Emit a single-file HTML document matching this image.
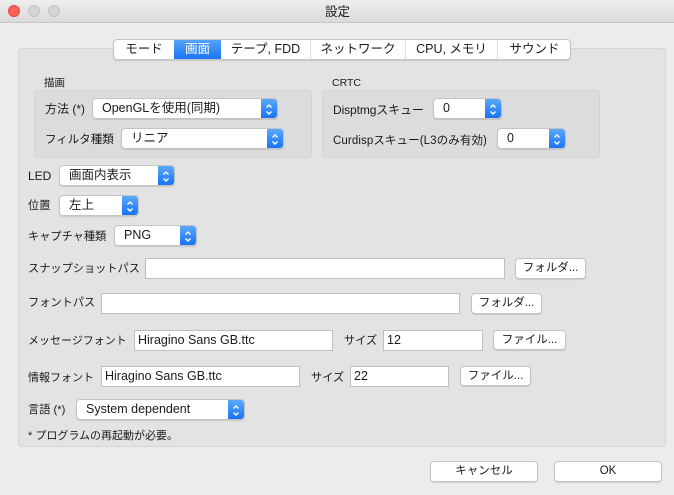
<!DOCTYPE html>
<html><head><meta charset="utf-8"><style>
*{box-sizing:border-box;margin:0;padding:0}
body{width:674px;height:495px;overflow:hidden;background:#ececec;font-family:"Liberation Sans","Noto Sans CJK JP",sans-serif;font-size:11.2px;color:#1a1a1a;position:relative}
.a{position:absolute;white-space:nowrap}
.t{line-height:14px}
.pop{position:absolute;background:#fff;border:1px solid #c4c4c4;border-radius:4px;box-shadow:0 1px 1px rgba(0,0,0,.12);line-height:19px;padding-left:9px;font-size:12.5px;overflow:hidden}
.pop i{position:absolute;right:0;top:0;bottom:0;width:16px;background:linear-gradient(#5aa8fc,#1873f5);border-radius:0 3px 3px 0}
.pop i svg{position:absolute;left:4px;top:4px}
.tx{position:absolute;background:#fff;border:1px solid #bdbdbd;line-height:19px;padding-left:3px;font-size:12.5px}
.btn{position:absolute;background:#fff;border:1px solid #c4c4c4;border-radius:4px;box-shadow:0 1px 1px rgba(0,0,0,.12);text-align:center;line-height:19px;font-size:11.5px}
.grp{position:absolute;background:#dcdcdc;border:1px solid #d2d2d2;border-radius:4px}
.l{font-size:12px}
</style></head><body>
<div class="a" style="left:0;top:0;width:674px;height:23px;background:linear-gradient(#eeeeee,#dadada);border-bottom:1px solid #c8c8c8"></div>
<div class="a" style="left:8px;top:5px;width:12px;height:12px;border-radius:50%;background:#fc605b;border:1px solid #de4a44"></div>
<div class="a" style="left:28px;top:5px;width:12px;height:12px;border-radius:50%;background:#d4d4d4;border:1px solid #c2c2c2"></div>
<div class="a" style="left:48px;top:5px;width:12px;height:12px;border-radius:50%;background:#d4d4d4;border:1px solid #c2c2c2"></div>
<div class="a t" style="left:325px;top:5px;font-size:12.5px">設定</div>

<div class="a" style="left:18px;top:48px;width:648px;height:399px;background:#e3e3e3;border:1px solid #d6d6d6;border-radius:4px"></div>

<div class="a" style="left:113px;top:39px;width:458px;height:21px;background:#fff;border:1px solid #c4c4c4;border-radius:4px;box-shadow:0 1px 1px rgba(0,0,0,.12);font-size:12.5px;line-height:19px">
<span class="a" style="left:0;width:60px;text-align:center">モード</span>
<span class="a" style="left:60px;width:47px;height:19px;text-align:center;background:linear-gradient(#56a3fb,#1a74f5);color:#fff">画面</span>
<span class="a" style="left:107px;width:90px;text-align:center;border-right:1px solid #ddd">テープ, FDD</span>
<span class="a" style="left:197px;width:95px;text-align:center;border-right:1px solid #ddd">ネットワーク</span>
<span class="a" style="left:292px;width:92px;text-align:center;border-right:1px solid #ddd">CPU, メモリ</span>
<span class="a" style="left:384px;width:73px;text-align:center">サウンド</span>
</div>

<div class="a t" style="left:44px;top:76px;font-size:10.5px">描画</div>
<div class="grp" style="left:34px;top:90px;width:278px;height:68px"></div>
<div class="a t" style="left:332px;top:76px;font-size:10.5px">CRTC</div>
<div class="grp" style="left:322px;top:90px;width:278px;height:68px"></div>

<svg width="0" height="0" style="position:absolute"><defs><g id="ar"><path d="M1.5 4.5L4 2L6.5 4.5M1.5 8.5L4 11L6.5 8.5" stroke="#fff" stroke-width="1.4" fill="none"/></g></defs></svg>

<div class="a t l" style="left:45px;top:102px">方法 (*)</div>
<div class="pop" style="left:92px;top:98px;width:186px;height:21px">OpenGLを使用(同期)<i><svg width="8" height="13"><use href="#ar"/></svg></i></div>
<div class="a t" style="left:45px;top:133px;font-size:11.5px">フィルタ種類</div>
<div class="pop" style="left:121px;top:128px;width:163px;height:21px">リニア<i><svg width="8" height="13"><use href="#ar"/></svg></i></div>

<div class="a t" style="left:333px;top:103px;font-size:12px;letter-spacing:-0.1px">Disptmgスキュー</div>
<div class="pop" style="left:433px;top:98px;width:69px;height:21px">0<i><svg width="8" height="13"><use href="#ar"/></svg></i></div>
<div class="a t" style="left:333px;top:134px;font-size:11.5px;letter-spacing:0.1px">Curdispスキュー(L3のみ有効)</div>
<div class="pop" style="left:497px;top:128px;width:69px;height:21px">0<i><svg width="8" height="13"><use href="#ar"/></svg></i></div>

<div class="a t l" style="left:28px;top:169px">LED</div>
<div class="pop" style="left:59px;top:165px;width:116px;height:21px">画面内表示<i><svg width="8" height="13"><use href="#ar"/></svg></i></div>
<div class="a t" style="left:28px;top:199px">位置</div>
<div class="pop" style="left:59px;top:195px;width:80px;height:21px">左上<i><svg width="8" height="13"><use href="#ar"/></svg></i></div>
<div class="a t" style="left:28px;top:230px">キャプチャ種類</div>
<div class="pop" style="left:114px;top:225px;width:83px;height:21px">PNG<i><svg width="8" height="13"><use href="#ar"/></svg></i></div>

<div class="a t" style="left:28px;top:262px">スナップショットパス</div>
<div class="tx" style="left:145px;top:258px;width:360px;height:21px"></div>
<div class="btn" style="left:515px;top:258px;width:71px;height:21px">フォルダ...</div>

<div class="a t" style="left:28px;top:296px">フォントパス</div>
<div class="tx" style="left:101px;top:293px;width:359px;height:21px"></div>
<div class="btn" style="left:471px;top:293px;width:71px;height:21px">フォルダ...</div>

<div class="a t" style="left:28px;top:334px;font-size:11px">メッセージフォント</div>
<div class="tx" style="left:134px;top:330px;width:199px;height:21px">Hiragino Sans GB.ttc</div>
<div class="a t" style="left:344px;top:334px">サイズ</div>
<div class="tx" style="left:383px;top:330px;width:100px;height:21px">12</div>
<div class="btn" style="left:493px;top:330px;width:73px;height:20px">ファイル...</div>

<div class="a t" style="left:28px;top:371px;font-size:11px">情報フォント</div>
<div class="tx" style="left:101px;top:366px;width:199px;height:21px">Hiragino Sans GB.ttc</div>
<div class="a t" style="left:311px;top:371px">サイズ</div>
<div class="tx" style="left:350px;top:366px;width:99px;height:21px">22</div>
<div class="btn" style="left:460px;top:366px;width:71px;height:20px">ファイル...</div>

<div class="a t" style="left:28px;top:403px">言語 (*)</div>
<div class="pop" style="left:76px;top:399px;width:169px;height:21px">System dependent<i><svg width="8" height="13"><use href="#ar"/></svg></i></div>
<div class="a t" style="left:28px;top:429px;font-size:11px">* プログラムの再起動が必要。</div>

<div class="btn" style="left:430px;top:461px;width:108px;height:21px">キャンセル</div>
<div class="btn" style="left:554px;top:461px;width:108px;height:21px">OK</div>
</body></html>
